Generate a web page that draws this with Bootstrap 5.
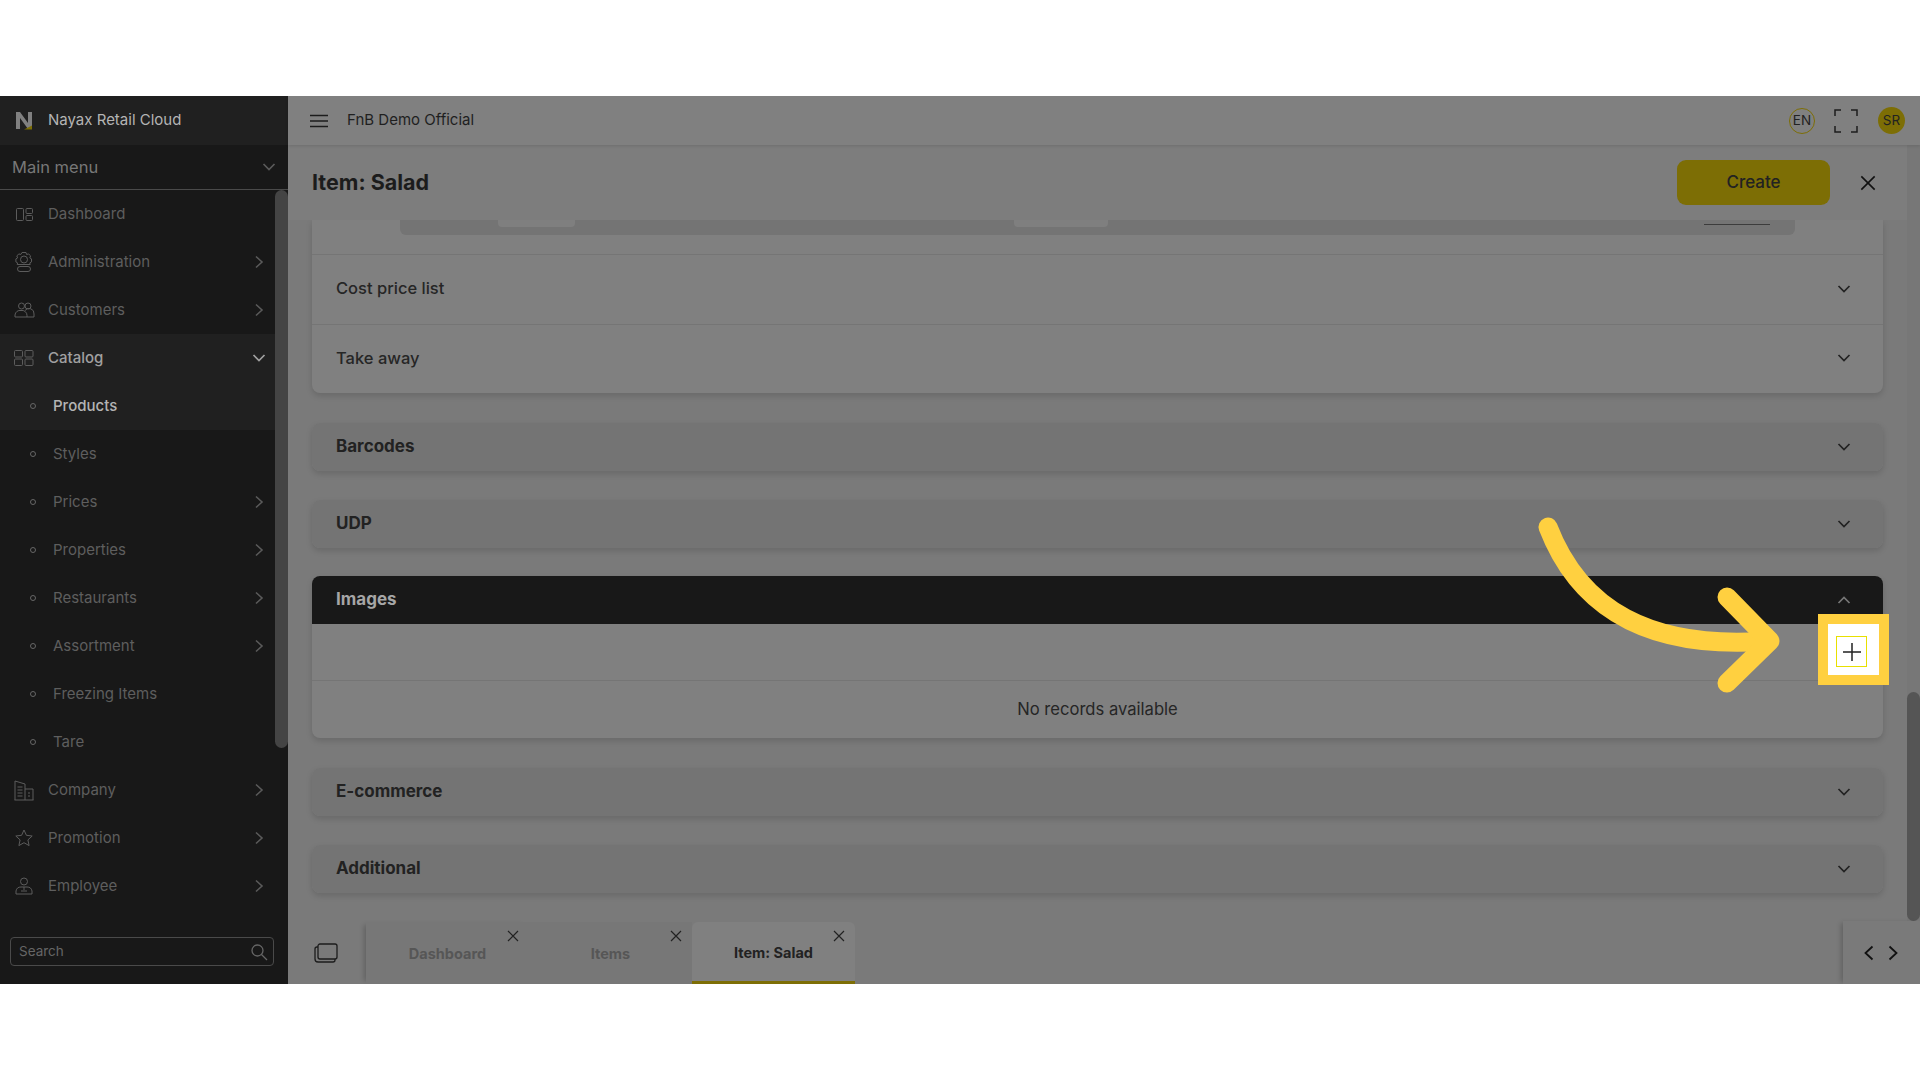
<!DOCTYPE html>
<html lang="en">
<head>
  <meta charset="UTF-8">
  <title>Nayax Retail Cloud - Item: Salad</title>
  <meta name="viewport" content="width=device-width, initial-scale=1">
  <link href="https://cdn.jsdelivr.net/npm/bootstrap@5.3.0/dist/css/bootstrap.min.css" rel="stylesheet">
  <style>
    body { background: #fff; font-family: Inter, Roboto, "Liberation Sans", sans-serif; overflow: hidden; }
    svg { display: block; flex: none; }
    .band { height: 96px; }
    .app-frame { height: 888px; position: relative; overflow: hidden; }

    /* sidebar */
    .side { width: 288px; background: #181818; }
    .side-logo { height: 49px; background: #202020; padding-left: 14px; gap: 14px; color: #b4b4b4; font-size: 15px; }
    .side-head { height: 45px; border-bottom: 1px solid #4a4a4a; padding: 0 12px; color: #777; font-size: 16.5px; }
    .side-body { min-height: 0; }
    .side-list { width: 275px; }
    .side-track { width: 13px; }
    .side-thumb { height: 558px; background: #444; border-radius: 7px; }
    .side-row { height: 48px; padding: 0 10px 0 14px; color: #5e5e5e; font-size: 15px; }
    .side-row .lbl { margin-left: 14px; }
    .side-row .lbl-wide { margin-left: 13px; }
    .side-row .dot { width: 6px; height: 6px; border: 1px solid #666; border-radius: 50%; margin: 0 17px 0 16px; }
    .side-row.open { background: #202020; color: #a0a0a0; font-weight: 500; }
    .side-row.here { background: #202020; color: #b4b4b4; font-weight: 500; }
    .side-caret { margin-right: -1px; }
    .side-search { padding: 0 14px 18px 10px; }
    .search-box { height: 29px; border: 1px solid #4a4a4a; border-radius: 4px; padding: 0 5px 0 8px; color: #666; font-size: 13.5px; }

    /* top bar */
    .topbar { height: 49px; background: #808080; padding: 0 15px 0 22px; box-shadow: 0 1px 3px rgba(0,0,0,.12); position: relative; z-index: 2; }
    .top-name { margin-left: 19px; color: #1f1f1f; font-size: 15px; }
    .lang-dot { width: 26px; height: 26px; border: 1px solid #7d6e05; border-radius: 50%; font-size: 13.5px; color: #222; }
    .user-dot { width: 27px; height: 27px; background: #7d6e05; border-radius: 50%; font-size: 13.5px; color: #222; }
    .top-full { margin: 0 20px 0 19px; }

    /* title row */
    .main-bg { background: #7a7a7a; min-height: 0; }
    .title-row { height: 75px; background: #7d7d7d; padding: 0 31px 0 24px; }
    .title-text { font-size: 21.5px; font-weight: 700; color: #1c1c1c; margin: 0; }
    .btn-create { width: 153px; height: 45px; background: #7d6e05; border: 0; border-radius: 9px; color: #222; font-size: 17px; font-weight: 500; padding: 0; }
    .btn-create:hover { background: #7d6e05; color: #222; }
    .title-close { margin-left: 30px; }
    .page-track { width: 13px; background: #777; }
    .page-thumb { height: 229px; margin-top: 547px; background: #555; border-radius: 7px; }

    /* panels */
    .panels { padding: 0 24px; min-height: 0; overflow: hidden; }
    .panel { background: #808080; border-radius: 8px; box-shadow: 0 3px 6px rgba(0,0,0,.14); margin-bottom: 28px; }
    .panel-top { border-radius: 0 0 8px 8px; margin-bottom: 30px; }
    .panel-barcodes { margin-bottom: 29px; }
    .panel-tall { margin-bottom: 30px; }
    .panel-shop { margin-bottom: 29px; }
    .strip-wrap { height: 35px; border-bottom: 1px solid #757575; padding: 0 88px; }
    .strip { height: 15px; background: #747474; border-radius: 0 0 6px 6px; }
    .chip { height: 7px; background: #7f7f7f; border-radius: 0 0 4px 4px; }
    .chip-a { width: 77px; margin-left: 98px; }
    .chip-b { width: 94px; margin-left: 439px; }
    .chip-line { width: 66px; height: 1px; margin: 4px 0 0 596px; background: #3c3c3c; }
    .sub-row { height: 69px; padding: 0 32px 2px 24px; font-size: 16.5px; font-weight: 500; color: #262626; }
    .sub-row + .sub-row { border-top: 1px solid #757575; }
    .panel-bar { height: 48px; padding: 0 32px 0 24px; background: #747474; border-radius: 8px; font-size: 17px; font-weight: 700; color: #222; }
    .panel-bar.dark { background: #181818; color: #a6a6a6; border-radius: 8px 8px 0 0; }
    .tool-row { height: 57px; border-bottom: 1px solid #757575; }
    .empty-row { height: 57px; color: #262626; font-size: 16.6px; }

    /* tabs */
    .tabbar { height: 63px; background: #7a7a7a; }
    .tab-icon { width: 78px; padding-left: 26px; }
    .tab-cell { width: 163px; height: 62px; margin-top: 1px; padding-top: 1px; position: relative; font-size: 14.5px; font-weight: 700; color: #565656; background: #777; }
    .tab-cell.first { box-shadow: -5px 0 5px -3px rgba(0,0,0,.2); }
    .tab-cell.cur { background: #808080; color: #222; border-bottom: 3px solid #7d6e05; border-radius: 6px 6px 0 0; padding-top: 3px; }
    .tab-x { position: absolute; top: 8px; right: 10px; }
    .tab-nav { width: 77px; gap: 12px; padding-left: 20px; box-shadow: -4px 0 5px -2px rgba(0,0,0,.2); }

    /* tutorial highlight on top of the dimmed page */
    .hint-arrow { position: absolute; left: 0; top: 0; pointer-events: none; }
    .hint-box { position: absolute; left: 1818px; top: 518px; width: 71px; height: 71px; border: 10px solid #ffd040; background: #fff; }
    .hint-btn { width: 31px; height: 31px; border: 1px solid #e8e000; margin: 12px 0 0 8px; }
  </style>
</head>
<body>
<svg width="0" height="0" class="position-absolute">
  <symbol id="chev-right" viewBox="0 0 12 14"><path d="M3 1.500 9 7l-6 5.500" fill="none" stroke="currentColor" stroke-width="1.600"/></symbol>
  <symbol id="chev-down" viewBox="0 0 14 10"><path d="M1.500 2 7 7.500 12.500 2" fill="none" stroke="currentColor" stroke-width="1.700"/></symbol>
  <symbol id="cross" viewBox="0 0 12 12"><path d="M1 1l10 10M11 1 1 11" fill="none" stroke="currentColor" stroke-width="1.200"/></symbol>
</svg>

<div class="band"></div>
<div class="app-frame d-flex">
  <aside class="side d-flex flex-column">
    <div class="side-logo d-flex align-items-center">
      <svg width="20" height="20" viewBox="0 0 20 20"><path d="M2 1h4l8 11V1h4v17h-4L6 7v11H2z" fill="#808080"/><path d="M10 18.500l8-4v4z" fill="#7d6e05"/></svg>
      <span>Nayax Retail Cloud</span>
    </div>
    <div class="side-head d-flex align-items-center justify-content-between">
      <span>Main menu</span>
      <svg width="14" height="10" color="#5a5a5a"><use href="#chev-down"/></svg>
    </div>
    <div class="side-body d-flex flex-grow-1 overflow-hidden">
      <div class="side-list">
        <div class="side-row d-flex align-items-center">
          <svg width="20" height="20" viewBox="0 0 20 20" fill="none" stroke="#5c5c5c"><rect x="2.500" y="4.500" width="7" height="12" rx="1"/><rect x="12" y="4.500" width="6.500" height="5" rx="1"/><rect x="12" y="11.500" width="6.500" height="5" rx="1"/></svg>
          <span class="lbl">Dashboard</span>
        </div>
        <div class="side-row d-flex align-items-center">
          <svg width="20" height="22" viewBox="0 0 20 22" fill="none" stroke="#5c5c5c"><path d="M8 1.500h4l.6 2 2-.6 2 2-.8 2 1.700 1v3l-1.700 1 .4 1.600h-13l.4-1.600-1.700-1v-3l1.700-1-.8-2 2-2 2 .6z"/><circle cx="10" cy="8.500" r="3.500"/><rect x="3.500" y="15.500" width="13" height="5" rx="2.500"/></svg>
          <span class="lbl">Administration</span>
          <svg class="ms-auto" width="12" height="14" color="#5a5a5a"><use href="#chev-right"/></svg>
        </div>
        <div class="side-row d-flex align-items-center">
          <svg width="21" height="20" viewBox="0 0 21 20" fill="none" stroke="#5c5c5c"><circle cx="7.500" cy="6" r="3"/><circle cx="14" cy="6" r="3"/><path d="M1 17v-2a5 5 0 0 1 6-4.500 5 5 0 0 1 6 5V17zM11 10.500a5 5 0 0 1 9 3.500v3h-7"/></svg>
          <span class="lbl-wide">Customers</span>
          <svg class="ms-auto" width="12" height="14" color="#5a5a5a"><use href="#chev-right"/></svg>
        </div>
        <div class="side-row open d-flex align-items-center">
          <svg width="20" height="18" viewBox="0 0 20 18" fill="none" stroke="#5c5c5c"><rect x=".5" y="1.500" width="8" height="6.500" rx="1"/><rect x="11" y="1.500" width="8" height="6.500" rx="1"/><rect x=".5" y="10" width="8" height="6.500" rx="1"/><rect x="11" y="10" width="8" height="6.500" rx="1"/></svg>
          <span class="lbl">Catalog</span>
          <svg class="side-caret ms-auto" width="14" height="10" color="#a0a0a0"><use href="#chev-down"/></svg>
        </div>
        <div class="side-row here d-flex align-items-center"><span class="dot"></span><span>Products</span></div>
        <div class="side-row d-flex align-items-center"><span class="dot"></span><span>Styles</span></div>
        <div class="side-row d-flex align-items-center"><span class="dot"></span><span>Prices</span><svg class="ms-auto" width="12" height="14" color="#5a5a5a"><use href="#chev-right"/></svg></div>
        <div class="side-row d-flex align-items-center"><span class="dot"></span><span>Properties</span><svg class="ms-auto" width="12" height="14" color="#5a5a5a"><use href="#chev-right"/></svg></div>
        <div class="side-row d-flex align-items-center"><span class="dot"></span><span>Restaurants</span><svg class="ms-auto" width="12" height="14" color="#5a5a5a"><use href="#chev-right"/></svg></div>
        <div class="side-row d-flex align-items-center"><span class="dot"></span><span>Assortment</span><svg class="ms-auto" width="12" height="14" color="#5a5a5a"><use href="#chev-right"/></svg></div>
        <div class="side-row d-flex align-items-center"><span class="dot"></span><span>Freezing Items</span></div>
        <div class="side-row d-flex align-items-center"><span class="dot"></span><span>Tare</span></div>
        <div class="side-row d-flex align-items-center">
          <svg width="20" height="21" viewBox="0 0 20 21" fill="none" stroke="#5c5c5c"><path d="M1 20V1l10 3v16M11 9h8v11M.5 20h19M3.500 7h5M3.500 10h5M3.500 13h5M3.500 16h5M14 13h2M14 16h2"/></svg>
          <span class="lbl">Company</span>
          <svg class="ms-auto" width="12" height="14" color="#5a5a5a"><use href="#chev-right"/></svg>
        </div>
        <div class="side-row d-flex align-items-center">
          <svg width="20" height="20" viewBox="0 0 20 20" fill="none" stroke="#5c5c5c"><path d="M10 2l2.400 5.300 5.800.7-4.300 3.900 1.200 5.700L10 14.700l-5.100 2.900 1.200-5.700L1.800 8l5.800-.7z"/></svg>
          <span class="lbl">Promotion</span>
          <svg class="ms-auto" width="12" height="14" color="#5a5a5a"><use href="#chev-right"/></svg>
        </div>
        <div class="side-row d-flex align-items-center">
          <svg width="20" height="20" viewBox="0 0 20 20" fill="none" stroke="#5c5c5c"><circle cx="10" cy="5.500" r="3.500"/><path d="M2 18v-3a5 5 0 0 1 5-4h6a5 5 0 0 1 5 4v3zM10 11v3M7 15h6"/></svg>
          <span class="lbl">Employee</span>
          <svg class="ms-auto" width="12" height="14" color="#5a5a5a"><use href="#chev-right"/></svg>
        </div>
      </div>
      <div class="side-track"><div class="side-thumb"></div></div>
    </div>
    <div class="side-search">
      <div class="search-box d-flex align-items-center justify-content-between">
        <span>Search</span>
        <svg width="18" height="18" viewBox="0 0 18 18" fill="none" stroke="#666" stroke-width="1.300"><circle cx="7.500" cy="7.500" r="5.500"/><path d="M11.500 11.500 17 17"/></svg>
      </div>
    </div>
  </aside>

  <main class="d-flex flex-column flex-grow-1">
    <header class="topbar d-flex align-items-center">
      <svg width="18" height="14" viewBox="0 0 18 14" stroke="#1c1c1c" stroke-width="1.500"><path d="M0 1.500h18M0 7h18M0 12.500h18"/></svg>
      <span class="top-name">FnB Demo Official</span>
      <div class="lang-dot d-flex align-items-center justify-content-center ms-auto">EN</div>
      <svg class="top-full" width="24" height="24" viewBox="0 0 24 24" fill="none" stroke="#1c1c1c" stroke-width="1.500"><path d="M1 7V1h6M17 1h6v6M23 17v6h-6M7 23H1v-6"/></svg>
      <div class="user-dot d-flex align-items-center justify-content-center">SR</div>
    </header>

    <div class="main-bg d-flex flex-grow-1">
      <div class="d-flex flex-column flex-grow-1">
        <div class="title-row d-flex align-items-center">
          <h1 class="title-text">Item: Salad</h1>
          <button class="btn btn-create ms-auto" type="button">Create</button>
          <svg class="title-close" width="16" height="16" color="#111"><use href="#cross"/></svg>
        </div>
        <div class="panels flex-grow-1">
          <div class="panel panel-top">
            <div class="strip-wrap">
              <div class="strip d-flex align-items-start">
                <div class="chip chip-a"></div>
                <div class="chip chip-b"></div>
                <div class="chip-line"></div>
              </div>
            </div>
            <div class="sub-row d-flex align-items-center justify-content-between">
              <span>Cost price list</span>
              <svg width="14" height="10" color="#222"><use href="#chev-down"/></svg>
            </div>
            <div class="sub-row d-flex align-items-center justify-content-between">
              <span>Take away</span>
              <svg width="14" height="10" color="#222"><use href="#chev-down"/></svg>
            </div>
          </div>
          <div class="panel panel-barcodes">
            <div class="panel-bar d-flex align-items-center justify-content-between">
              <span>Barcodes</span>
              <svg width="14" height="10" color="#222"><use href="#chev-down"/></svg>
            </div>
          </div>
          <div class="panel">
            <div class="panel-bar d-flex align-items-center justify-content-between">
              <span>UDP</span>
              <svg width="14" height="10" color="#222"><use href="#chev-down"/></svg>
            </div>
          </div>
          <div class="panel panel-tall">
            <div class="panel-bar dark d-flex align-items-center justify-content-between">
              <span>Images</span>
              <svg width="14" height="10" viewBox="0 0 14 10" fill="none" stroke="#777" stroke-width="1.700"><path d="M1.500 8 7 2.500 12.500 8"/></svg>
            </div>
            <div class="tool-row"></div>
            <div class="empty-row d-flex align-items-center justify-content-center">No records available</div>
          </div>
          <div class="panel panel-shop">
            <div class="panel-bar d-flex align-items-center justify-content-between">
              <span>E-commerce</span>
              <svg width="14" height="10" color="#222"><use href="#chev-down"/></svg>
            </div>
          </div>
          <div class="panel">
            <div class="panel-bar d-flex align-items-center justify-content-between">
              <span>Additional</span>
              <svg width="14" height="10" color="#222"><use href="#chev-down"/></svg>
            </div>
          </div>
        </div>
      </div>
      <div class="page-track"><div class="page-thumb"></div></div>
    </div>

    <div class="tabbar d-flex align-items-start">
      <div class="tab-icon d-flex align-items-center h-100">
        <svg width="24" height="20" viewBox="0 0 24 20" fill="none" stroke="#1c1c1c" stroke-width="1.300"><rect x="4" y="1" width="19" height="15" rx="2"/><path d="M4 4H3a2 2 0 0 0-2 2v10a3 3 0 0 0 3 3h15a2 2 0 0 0 2-2v-1"/></svg>
      </div>
      <div class="tab-cell first d-flex align-items-center justify-content-center">Dashboard<svg class="tab-x" width="12" height="12" color="#222"><use href="#cross"/></svg></div>
      <div class="tab-cell d-flex align-items-center justify-content-center">Items<svg class="tab-x" width="12" height="12" color="#222"><use href="#cross"/></svg></div>
      <div class="tab-cell cur d-flex align-items-center justify-content-center">Item: Salad<svg class="tab-x" width="12" height="12" color="#222"><use href="#cross"/></svg></div>
      <div class="tab-nav d-flex align-items-center h-100 ms-auto">
        <svg width="12" height="16" viewBox="0 0 12 16" fill="none" stroke="#111" stroke-width="1.800"><path d="M9.500 1.500 2.500 8l7 6.500"/></svg>
        <svg width="12" height="16" viewBox="0 0 12 16" fill="none" stroke="#111" stroke-width="1.800"><path d="M2.500 1.500 9.500 8l-7 6.500"/></svg>
      </div>
    </div>
  </main>

  <!-- tutorial arrow and highlight -->
  <svg class="hint-arrow" width="1920" height="888" viewBox="0 96 1920 888" fill="none" stroke="#ffd040" stroke-width="19" stroke-linecap="round" stroke-linejoin="round">
    <path d="M1548 527C1580 610 1650 650 1768 641"/>
    <path d="M1727 597 1770 641 1727 683"/>
  </svg>
  <div class="hint-box">
    <div class="hint-btn d-flex align-items-center justify-content-center">
      <svg width="18" height="18" viewBox="0 0 18 18" stroke="#222" stroke-width="1.500"><path d="M9 0v18M0 9h18"/></svg>
    </div>
  </div>
</div>
<div class="band"></div>
</body>
</html>
